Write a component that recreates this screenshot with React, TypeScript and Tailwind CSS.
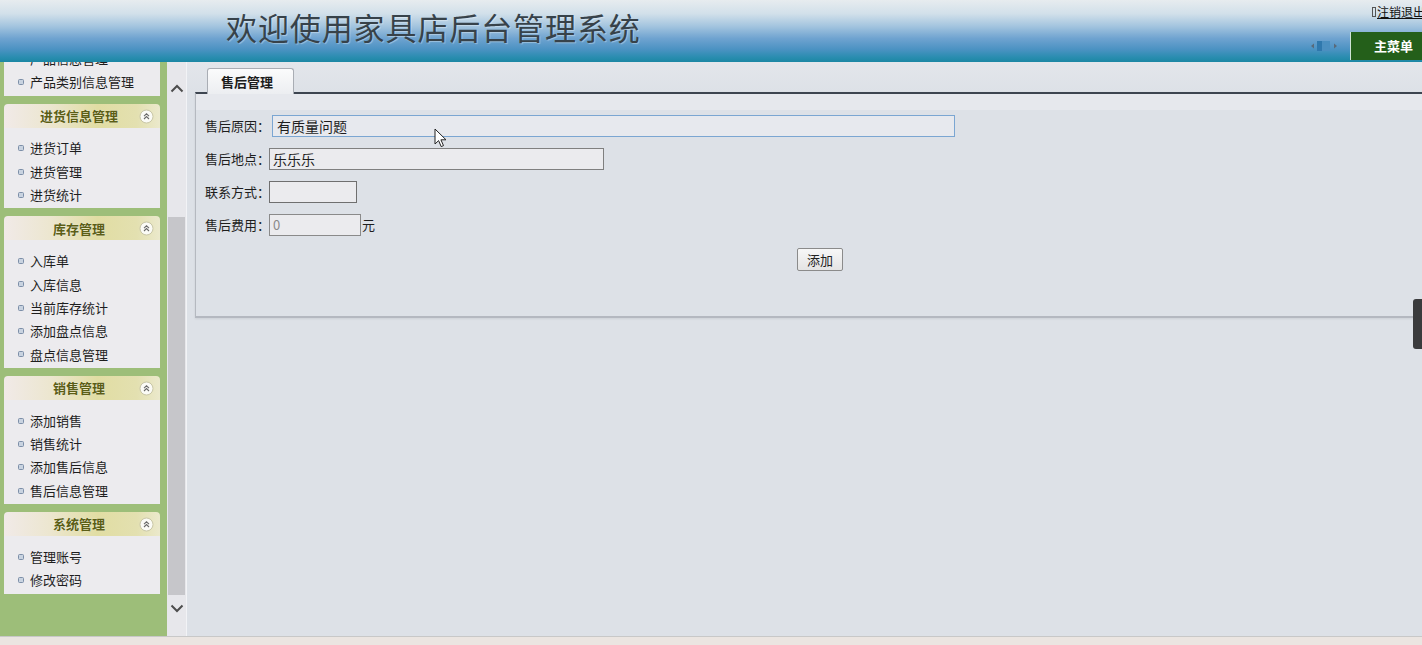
import React from 'react'

const cjk = "font-['Noto_Sans_CJK_SC','Liberation_Sans',sans-serif]"

const menus = [
  { title: '', items: ['产品信息管理', '产品类别信息管理'] },
  { title: '进货信息管理', items: ['进货订单', '进货管理', '进货统计'] },
  { title: '库存管理', items: ['入库单', '入库信息', '当前库存统计', '添加盘点信息', '盘点信息管理'] },
  { title: '销售管理', items: ['添加销售', '销售统计', '添加售后信息', '售后信息管理'] },
  { title: '系统管理', items: ['管理账号', '修改密码'] },
]

function CollapseIcon() {
  return (
    <svg width="15" height="15" viewBox="0 0 15 15">
      <circle cx="7.5" cy="7.5" r="6.5" fill="#fbfbf6" stroke="#c9c7a8" />
      <path d="M5 7.2l2.5-2.4 2.5 2.4M5 10l2.5-2.4 2.5 2.4" fill="none" stroke="#6a6a6a" strokeWidth="1.1" />
    </svg>
  )
}

function Bullet() {
  return <span className="w-[6px] h-[6px] rounded-[1.5px] border border-[#7d8fa8] bg-[#c9d3e0] shrink-0" />
}

function MenuPanel({ title, items }: { title: string; items: string[] }) {
  return (
    <div className="w-[156px] ml-[4px]">
      {title && (
        <div className="h-[24px] rounded-t-[4px] flex items-center relative bg-[linear-gradient(90deg,#f1eae8_0%,#ece6cf_30%,#e1dda3_60%,#e3e0b0_85%,#ebe9cc_100%)]">
          <span className="flex-1 text-center text-[13px] font-bold text-[#5b5e16] pr-[6px] [text-shadow:0_0_1px_rgba(255,255,255,0.8)]">{title}</span>
          <span className="absolute right-[6px] top-[5px] flex">
            <CollapseIcon />
          </span>
        </div>
      )}
      <div className="bg-[#ecebee] pt-[9px] pb-[2px]">
        {items.map((it) => (
          <div key={it} className="h-[23.3px] flex items-center gap-[6px] pl-[14px] text-[13px] text-[#1e1e1e]">
            <Bullet />
            <span>{it}</span>
          </div>
        ))}
      </div>
    </div>
  )
}

function Chevron({ up }: { up?: boolean }) {
  return (
    <svg width="14" height="9" viewBox="0 0 14 9">
      <path d={up ? 'M1.5 7.5L7 2l5.5 5.5' : 'M1.5 1.5L7 7l5.5-5.5'} fill="none" stroke="#4d4d4d" strokeWidth="2" />
    </svg>
  )
}

export default function App() {
  return (
    <div className={`relative w-[1422px] h-[645px] overflow-hidden flex flex-col bg-[#dde1e7] ${cjk}`}>
      {/* Header */}
      <header className="h-[62px] shrink-0 flex bg-[linear-gradient(180deg,#e7ecef_0%,#d2e0ea_22%,#a4c5df_42%,#6fa3d0_62%,#4a92c2_80%,#2a8db0_92%,#1b87a4_100%)]">
        <h1 className="pl-[226px] pt-[7px] text-[31px] leading-[40px] tracking-[0.9px] font-normal text-[#37424a] [text-shadow:1px_1px_1px_rgba(255,255,255,0.35)]">
          欢迎使用家具店后台管理系统
        </h1>
        <div className="ml-auto flex flex-col items-end">
          <a className="mt-[4px] flex items-center gap-[1px] text-[12px] leading-[16px] text-[#111] underline whitespace-nowrap w-[50px] overflow-hidden">
            <span className="w-[4px] h-[10px] border border-[#555] shrink-0" />
            注销退出
          </a>
          <div className="mt-auto mb-[2px] flex items-center">
            <svg width="28" height="12" viewBox="0 0 28 12" className="mr-[12px]">
              <path d="M1 6l3-2.5v5z" fill="#5a6a7a" />
              <rect x="7" y="1" width="13" height="10" fill="#4b8fc0" />
              <rect x="7" y="1" width="5" height="10" fill="#2f78ad" />
              <path d="M27 6l-3-2.5v5z" fill="#5a6a7a" />
            </svg>
            <div className="w-[72px] h-[28px] bg-[#245f1a] border-l border-[#cfe3d5] flex items-center justify-center pl-[14px] text-[13px] font-bold text-white">
              主菜单
            </div>
          </div>
        </div>
      </header>

      <div className="flex flex-1 min-h-0">
        {/* Sidebar */}
        <aside className="w-[167px] shrink-0 bg-[#9dbe79] overflow-hidden">
          <div className="-mt-[24px] flex flex-col gap-[8px]">
            {menus.map((m) => (
              <MenuPanel key={m.items[0]} title={m.title} items={m.items} />
            ))}
          </div>
        </aside>

        {/* Scrollbar */}
        <div className="w-[20px] shrink-0 bg-[#e7e7eb] border-r border-[#f2f3f6] flex flex-col items-center">
          <div className="h-[35px] flex items-end justify-center pb-[4px]">
            <Chevron up />
          </div>
          <div className="h-[120px]" />
          <div className="w-[17px] h-[378px] bg-[#c6c6ca]" />
          <div className="h-[16px] flex items-center justify-center mt-[5px]">
            <Chevron />
          </div>
        </div>

        {/* Main */}
        <main className="flex-1 bg-[#dde1e7]">
          <div className="h-[30px] flex items-end pl-[20px] bg-[linear-gradient(180deg,#e3e6eb_0%,#dde1e7_100%)]">
            <div className="relative z-10 -mb-[2px] w-[87px] h-[26px] rounded-t-[3px] border border-b-0 border-[#a9adb4] bg-[linear-gradient(180deg,#fbfbfc_0%,#eceef1_100%)] flex items-center pl-[13px] text-[13px] font-bold text-[#1c1c1c]">
              售后管理
            </div>
          </div>
          <section className="ml-[8px] border-t-2 border-t-[#3d4550] border-l border-l-[#b5b9c0] border-b-2 border-b-[#b4b8c0] shadow-[0_1px_2px_rgba(0,0,0,0.08)]">
            <div className="h-[16px] bg-[#e6e8ed]" />
            <div className="pl-[9px] pt-[5px] pb-[45px] flex flex-col gap-[11px] text-[13px] text-[#1e1e1e]">
              <div className="flex items-center h-[22px]">
                <span className="w-[67px] whitespace-nowrap">售后原因：</span>
                <div className="w-[683px] h-[22px] border border-[#7ba6d2] bg-[#e7e9ee] flex items-center pl-[4px] text-[14px]">有质量问题</div>
              </div>
              <div className="flex items-center h-[22px]">
                <span className="w-[64px] whitespace-nowrap">售后地点：</span>
                <div className="w-[335px] h-[22px] border border-[#7f7f7f] bg-[#ebebee] flex items-center pl-[3px] text-[14px]">乐乐乐</div>
              </div>
              <div className="flex items-center h-[22px]">
                <span className="w-[64px] whitespace-nowrap">联系方式：</span>
                <div className="w-[88px] h-[22px] border border-[#6f6f6f] bg-[#ebebee]" />
              </div>
              <div className="flex items-center h-[22px]">
                <span className="w-[64px] whitespace-nowrap">售后费用：</span>
                <div className="w-[92px] h-[22px] border border-[#8a8a8a] bg-[#ebebee] flex items-center pl-[3px] text-[13px] text-[#8a8a8a]">0</div>
                <span className="ml-[1px] text-[13px]">元</span>
              </div>
              <div className="flex pt-[1px]">
                <button className="ml-[592px] w-[46px] h-[23px] border border-[#8b8b8b] rounded-[2px] bg-[linear-gradient(180deg,#f7f7f7_0%,#e4e4e4_100%)] text-[13px] text-[#222]">
                  添加
                </button>
              </div>
            </div>
          </section>
        </main>
      </div>

      {/* Bottom bar */}
      <div className="h-[9px] shrink-0 bg-[#ebe5e1] border-t border-[#c8c8c8]" />

      {/* right edge handle */}
      <div className="absolute right-0 top-[299px] w-[9px] h-[50px] rounded-l-[3px] bg-[#3a3b3d]" />

      {/* mouse cursor */}
      <svg className="absolute left-[434px] top-[128px]" width="13" height="20" viewBox="0 0 13 20">
        <path d="M1 1v15l3.6-3.4 2.6 6 2.3-1-2.6-5.8H12z" fill="#fff" stroke="#222" strokeWidth="1" strokeLinejoin="round" />
      </svg>
    </div>
  )
}
